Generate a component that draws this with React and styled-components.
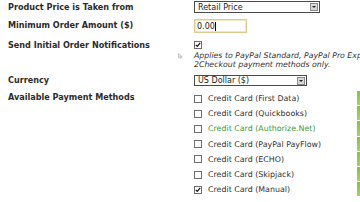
import React from 'react';
import styled, { createGlobalStyle } from 'styled-components';

const GlobalStyle = createGlobalStyle`
  html, body {
    margin: 0;
    padding: 0;
    background: #fff;
    overflow: hidden;
  }
  body {
    font-family: "DejaVu Sans", Verdana, sans-serif;
    color: #333;
  }
`;

const Page = styled.div`
  width: 360px;
  height: 202px;
  padding-left: 8px;
  box-sizing: border-box;
  overflow: hidden;
`;

const Row = styled.div`
  display: grid;
  grid-template-columns: 186px 166px;
  height: ${({ h }) => h}px;
`;

const Label = styled.div`
  font-size: 8.1px;
  font-weight: bold;
  line-height: 10px;
  color: #2b2b2b;
  padding-top: ${({ top }) => top}px;
  white-space: nowrap;
`;

const Cell = styled.div`
  padding-top: ${({ top }) => top}px;
  position: relative;
  display: flex;
  flex-direction: column;
  align-items: flex-start;
`;

const SelectBox = styled.div`
  width: ${({ w }) => w}px;
  height: ${({ h }) => h}px;
  box-sizing: border-box;
  border: 1px solid #4a4a4a;
  display: flex;
  align-items: center;
  justify-content: space-between;
  padding-left: 3px;
  padding-right: 1px;
  font-size: 8px;
  color: #222;
  background: #fff;
`;

const ArrowButton = styled.span`
  width: 8px;
  height: 8px;
  box-sizing: border-box;
  border: 1px solid #8a8a8a;
  background: #d8d8d8;
  display: flex;
  align-items: center;
  justify-content: center;

  &::after {
    content: '';
    border-left: 2px solid transparent;
    border-right: 2px solid transparent;
    border-top: 2px solid #222;
  }
`;

const TextInput = styled.div`
  width: 53px;
  height: 14px;
  box-sizing: border-box;
  border: 1px solid #e0c98a;
  box-shadow: inset 0 0 0 1px #f3e6c2;
  font-size: 8px;
  padding-left: 2px;
  display: flex;
  align-items: center;
  color: #222;
`;

const Caret = styled.span`
  display: inline-block;
  width: 1px;
  height: 9px;
  background: #000;
  margin-left: 0.5px;
`;

const Box = styled.span`
  width: 8px;
  height: 8px;
  box-sizing: border-box;
  border: 1px solid #6d6d6d;
  background: #fff;
  display: flex;
  align-items: center;
  justify-content: center;
  flex-shrink: 0;
`;

const Note = styled.div`
  font-size: 7.8px;
  font-style: italic;
  line-height: 9px;
  color: #333;
  white-space: nowrap;
  margin-top: 2px;
`;

const HintIcon = styled.svg`
  position: absolute;
  left: -16px;
  top: 17px;
`;

const MethodList = styled.div`
  display: flex;
  flex-direction: column;
  padding-top: 1px;
`;

const MethodRow = styled.div`
  display: flex;
  align-items: center;
  height: 15.2px;
  font-size: 7.9px;
  color: ${({ green }) => (green ? '#3f9b35' : '#333')};
`;

const MethodText = styled.span`
  margin-left: 6px;
  flex: 1;
  white-space: nowrap;
`;

const Tick = styled.span`
  align-self: stretch;
  width: 3px;
  margin-bottom: 1px;
  background: linear-gradient(#86c33a, #a3d45c);
`;

const Check = () => (
  <svg width="6" height="6" viewBox="0 0 6 6">
    <path d="M0.8 2.8 L2.3 4.4 L5.2 0.9" stroke="#111" strokeWidth="1.2" fill="none" />
  </svg>
);

const Checkbox = ({ checked }) => <Box>{checked && <Check />}</Box>;

const methods = [
  { name: 'Credit Card (First Data)' },
  { name: 'Credit Card (Quickbooks)' },
  { name: 'Credit Card (Authorize.Net)', green: true },
  { name: 'Credit Card (PayPal PayFlow)' },
  { name: 'Credit Card (ECHO)' },
  { name: 'Credit Card (Skipjack)' },
  { name: 'Credit Card (Manual)', checked: true },
];

const App = () => {
  return (
    <Page>
      <GlobalStyle />
      <Row h={15}>
        <Label top={1.5}>Product Price is Taken from</Label>
        <Cell top={1}>
          <SelectBox w={126} h={12}>
            Retail Price
            <ArrowButton />
          </SelectBox>
        </Cell>
      </Row>
      <Row h={21}>
        <Label top={5}>Minimum Order Amount ($)</Label>
        <Cell top={4}>
          <TextInput>
            0.00
            <Caret />
          </TextInput>
        </Cell>
      </Row>
      <Row h={34}>
        <Label top={4}>Send Initial Order Notifications</Label>
        <Cell top={5}>
          <Checkbox checked />
          <HintIcon width="5" height="6" viewBox="0 0 5 6">
            <path d="M0.5 0.5 L0.5 5 L1.7 3.9 L2.6 5.6 L3.3 5.2 L2.5 3.6 L4.2 3.6 Z" fill="#eee" stroke="#aaa" strokeWidth="0.6" />
          </HintIcon>
          <Note>
            Applies to PayPal Standard, PayPal Pro Express, PayPal Pro and
            <br />
            2Checkout payment methods only.
          </Note>
        </Cell>
      </Row>
      <Row h={20}>
        <Label top={4.5}>Currency</Label>
        <Cell top={5}>
          <SelectBox w={113} h={11}>
            US Dollar ($)
            <ArrowButton />
          </SelectBox>
        </Cell>
      </Row>
      <Row h={112}>
        <Label top={2}>Available Payment Methods</Label>
        <MethodList>
          {methods.map((m) => (
            <MethodRow key={m.name} green={m.green}>
              <Checkbox checked={m.checked} />
              <MethodText>{m.name}</MethodText>
              <Tick />
            </MethodRow>
          ))}
        </MethodList>
      </Row>
    </Page>
  );
};

export default App;
